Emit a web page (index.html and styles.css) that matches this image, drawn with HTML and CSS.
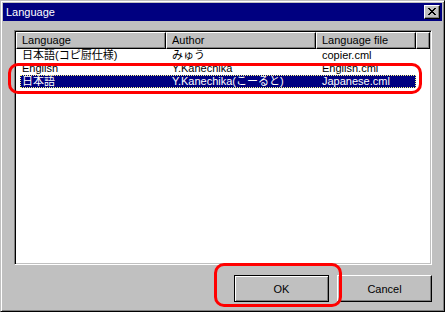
FILE: index.html
```html
<!DOCTYPE html>
<html>
<head>
<meta charset="utf-8">
<link rel="stylesheet" href="styles.css">
</head>
<body>
<div class="window">
  <div class="titlebar">
    <span class="title">Language</span>
    <div class="close">
      <svg width="8" height="7" viewBox="0 0 8 7"><path d="M0 0h2v1h1v1h2V1h1V0h2v1H7v1H6v1H5v1h1v1h1v1h1v1H6V6H5V5H3v1H2v1H0V6h1V5h1V4h1V3H2V2H1V1H0z" fill="#000"/></svg>
    </div>
  </div>
  <div class="body">
    <div class="list">
      <div class="header">
        <div class="hcell c1">Language</div>
        <div class="hcell c2">Author</div>
        <div class="hcell c3">Language file</div>
        <div class="hcell c4"></div>
      </div>
      <div class="row">
        <div class="cell first">日本語(コピ厨仕様)</div>
        <div class="cell c2">みゅう</div>
        <div class="cell c3">copier.cml</div>
      </div>
      <div class="row">
        <div class="cell first">English</div>
        <div class="cell c2">Y.Kanechika</div>
        <div class="cell c3">English.cml</div>
      </div>
      <div class="row selected">
        <div class="cell first">日本語</div>
        <div class="cell c2">Y.Kanechika(こーると)</div>
        <div class="cell c3">Japanese.cml</div>
      </div>
    </div>
    <div class="buttons">
      <button class="btn default">OK</button>
      <button class="btn">Cancel</button>
    </div>
  </div>
  <div class="mark mark-row"></div>
  <div class="mark mark-ok"></div>
</div>
</body>
</html>
```

FILE: styles.css
```css
html, body {
  margin: 0;
  padding: 0;
  background: #c0c0c0;
}
body {
  width: 445px;
  height: 312px;
  overflow: hidden;
  font-family: "Liberation Sans", "Noto Sans CJK JP", sans-serif;
  font-size: 11px;
}
.window {
  position: relative;
  width: 445px;
  height: 312px;
  box-sizing: border-box;
  background: #c0c0c0;
  border: 1px solid;
  border-color: #c0c0c0 #000 #000 #c0c0c0;
  box-shadow: inset 1px 1px #fff, inset -1px -1px #808080;
  padding: 2px;
  display: flex;
  flex-direction: column;
}
.titlebar {
  height: 18px;
  background: #000080;
  color: #fff;
  display: flex;
  align-items: center;
  justify-content: space-between;
  padding: 0 2px 0 3px;
}
.title {
  font-size: 11px;
  line-height: 18px;
}
.close {
  width: 16px;
  height: 14px;
  box-sizing: border-box;
  background: #c0c0c0;
  border: 1px solid;
  border-color: #fff #000 #000 #fff;
  box-shadow: inset -1px -1px #808080;
  display: flex;
  align-items: center;
  justify-content: center;
  padding: 0 1px 1px 0;
}
.close svg { display: block; }
.body {
  padding: 9px 10px 0 11px;
  display: flex;
  flex-direction: column;
}
.list {
  width: 418px;
  height: 235px;
  box-sizing: border-box;
  background: #fff;
  border: 1px solid;
  border-color: #808080 #fff #fff #808080;
  box-shadow: inset 1px 1px #000, inset -1px -1px #c0c0c0;
  padding: 1px;
  overflow: hidden;
}
.header {
  display: flex;
  height: 17px;
}
.hcell {
  box-sizing: border-box;
  height: 17px;
  background: #c0c0c0;
  border: 1px solid;
  border-color: #fff #000 #000 #fff;
  box-shadow: inset -1px -1px #808080;
  padding-left: 5px;
  line-height: 14px;
  white-space: nowrap;
}
.hcell.c1 { width: 150px; }
.hcell.c2 { width: 150px; }
.hcell.c3 { width: 100px; }
.hcell.c4 { width: 14px; }
.row {
  display: flex;
  height: 13px;
  line-height: 13px;
  margin-left: 4px;
  width: 396px;
  box-sizing: border-box;
  white-space: nowrap;
}
.cell {
  box-sizing: border-box;
  overflow: hidden;
}
.cell.first { width: 146px; padding-left: 2px; }
.cell.c2 { width: 150px; padding-left: 6px; }
.cell.c3 { width: 100px; padding-left: 6px; }
.row.selected {
  background: #000080;
  color: #fff;
  outline: 1px dotted #ffff80;
  outline-offset: -1px;
}
.row:first-of-type { }
.header + .row { margin-top: 0; }
.buttons {
  display: flex;
  justify-content: flex-end;
  gap: 8px;
  margin-top: 10px;
  padding-right: 0;
  width: 418px;
}
.btn {
  width: 95px;
  height: 27px;
  box-sizing: border-box;
  background: #c0c0c0;
  border: 1px solid;
  border-color: #fff #000 #000 #fff;
  box-shadow: inset -1px -1px #808080;
  font-family: "Liberation Sans", "Noto Sans CJK JP", sans-serif;
  font-size: 11px;
  color: #000;
  padding: 0;
  margin: 0;
}
.btn.default {
  border: 1px solid #000;
  box-shadow: inset 1px 1px #fff, inset -1px -1px #808080, inset -2px -2px #c0c0c0;
}
.mark {
  position: absolute;
  border: 3px solid #ff0000;
  border-radius: 10px;
  box-sizing: border-box;
  pointer-events: none;
}
.mark-row {
  left: 7px;
  top: 62px;
  width: 414px;
  height: 31px;
}
.mark-ok {
  left: 213px;
  top: 262px;
  width: 128px;
  height: 44px;
}
```
